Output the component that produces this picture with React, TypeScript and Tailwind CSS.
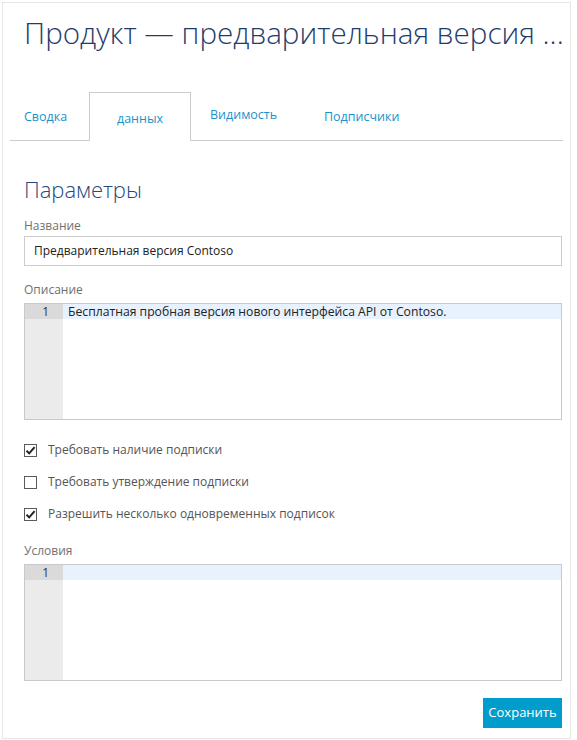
import React from 'react'

function Check({ checked }: { checked: boolean }) {
  return (
    <span className="flex h-[13px] w-[13px] items-center justify-center border border-[#5a5a5a] bg-white">
      {checked && (
        <svg width="11" height="11" viewBox="0 0 11 11">
          <path d="M1.5 5.8 L4.2 8.4 L9.6 2.2" fill="none" stroke="#222" strokeWidth="2" />
        </svg>
      )}
    </span>
  )
}

function Editor({ text }: { text: string }) {
  return (
    <div className="flex h-[117px] border border-[#c9c9c9] bg-white">
      <div className="w-[38px] shrink-0 bg-[#ebebeb]">
        <div className="h-[15px] bg-[#dadada] pr-[14px] text-right text-[12px] leading-[15px] text-[#333]">1</div>
      </div>
      <div className="flex-1">
        <div className="h-[15px] bg-[#e8f2fe] pl-[5px] text-[12.2px] leading-[15px] text-[#222]">{text}</div>
      </div>
    </div>
  )
}

export default function App() {
  const options = [
    { label: 'Требовать наличие подписки', checked: true },
    { label: 'Требовать утверждение подписки', checked: false },
    { label: 'Разрешить несколько одновременных подписок', checked: true },
  ]

  return (
    <div className="h-[740px] w-[577px] bg-white pl-[2px] pt-[2px] font-['Open_Sans',sans-serif]">
      <div className="flex h-[737px] w-[569px] flex-col border border-[#e6e6e6]">
        <h1 className="whitespace-nowrap pl-[21px] pt-[10px] text-[29.6px] font-light leading-[40px] text-[#1f3d6c]">
          Продукт — предварительная версия ...
        </h1>

        <div className="mx-[7px] mt-[39px] flex h-[49px] border-b border-[#cccccc] text-[12.5px] text-[#1a93cb]">
          <div className="flex w-[79px] items-center pl-[14px] pt-[3px]">Сводка</div>
          <div className="-mb-px flex w-[102px] items-center justify-center border border-b-0 border-[#cccccc] bg-white pt-[4px]">
            данных
          </div>
          <div className="flex w-[114px] items-center pb-[1px] pl-[19px]">Видимость</div>
          <div className="flex items-center pl-[19px] pt-[3px]">Подписчики</div>
        </div>

        <div className="flex flex-1 flex-col pl-[21px] pr-[8px]">
          <h2 className="mt-[33px] text-[22px] font-light leading-[30px] text-[#24497c]">Параметры</h2>

          <div className="mt-[13px] text-[12px] leading-[18px] text-[#707070]">Название</div>
          <div className="mt-[1px] flex h-[30px] items-center border border-[#cccccc] pl-[9px] text-[12px] text-[#222]">
            Предварительная версия Contoso
          </div>

          <div className="mt-[15px] text-[12px] leading-[18px] text-[#707070]">Описание</div>
          <div className="mt-[4px]">
            <Editor text="Бесплатная пробная версия нового интерфейса API от Contoso." />
          </div>

          <div className="mt-[21px] flex flex-col gap-[14px]">
            {options.map((o, i) => (
              <label key={i} className="flex h-[18px] items-center gap-[11px] text-[12px] text-[#555]">
                <Check checked={o.checked} />
                <span>{o.label}</span>
              </label>
            ))}
          </div>

          <div className="mt-[19px] text-[12px] leading-[18px] text-[#707070]">Условия</div>
          <div className="mt-[4px]">
            <Editor text="" />
          </div>

          <div className="mt-[17px] flex justify-end">
            <button className="h-[30px] w-[79px] bg-[#009ccc] text-[13px] text-white">Сохранить</button>
          </div>
        </div>
      </div>
    </div>
  )
}
